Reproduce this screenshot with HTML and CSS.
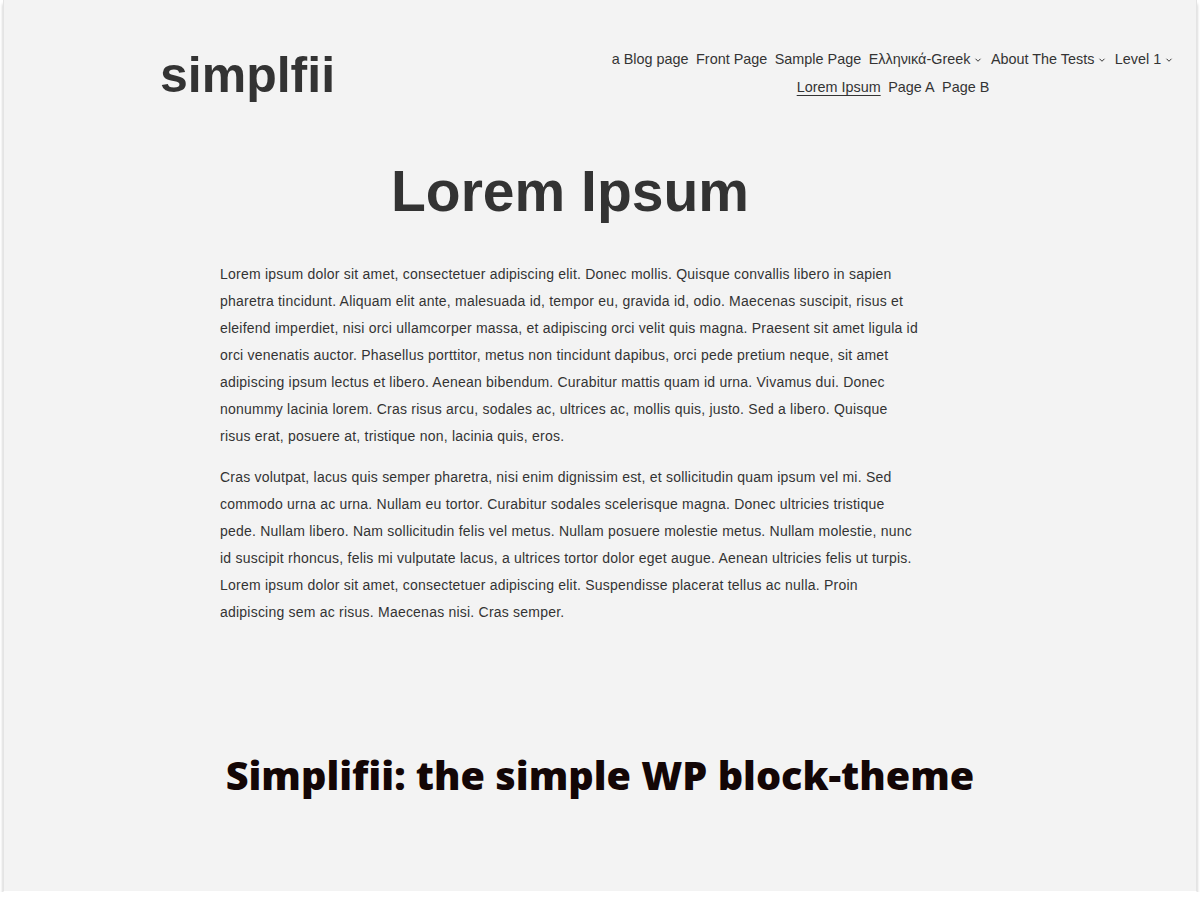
FILE: index.html
```html
<!DOCTYPE html>
<html lang="en">
<head>
<meta charset="utf-8">
<title>simplfii</title>
<link rel="stylesheet" href="styles.css">
</head>
<body>
<div class="frame">
  <header class="site-header">
    <div class="logo">simplfii</div>
    <nav class="nav">
      <a class="nav-item" href="#">a Blog page</a>
      <a class="nav-item" href="#">Front Page</a>
      <a class="nav-item" href="#">Sample Page</a>
      <a class="nav-item" href="#">Ελληνικά-Greek<svg class="chev" viewBox="0 0 12 12"><path d="M3 4.5 6 7.5 9 4.5" fill="none" stroke="currentColor" stroke-width="1.2"/></svg></a>
      <a class="nav-item" href="#">About The Tests<svg class="chev" viewBox="0 0 12 12"><path d="M3 4.5 6 7.5 9 4.5" fill="none" stroke="currentColor" stroke-width="1.2"/></svg></a>
      <a class="nav-item" href="#">Level 1<svg class="chev" viewBox="0 0 12 12"><path d="M3 4.5 6 7.5 9 4.5" fill="none" stroke="currentColor" stroke-width="1.2"/></svg></a>
      <a class="nav-item current" href="#">Lorem Ipsum</a>
      <a class="nav-item" href="#">Page A</a>
      <a class="nav-item" href="#">Page B</a>
    </nav>
  </header>
  <main class="content">
    <h1 class="title">Lorem Ipsum</h1>
    <p class="para">Lorem ipsum dolor sit amet, consectetuer adipiscing elit. Donec mollis. Quisque convallis libero in sapien pharetra tincidunt. Aliquam elit ante, malesuada id, tempor eu, gravida id, odio. Maecenas suscipit, risus et eleifend imperdiet, nisi orci ullamcorper massa, et adipiscing orci velit quis magna. Praesent sit amet ligula id orci venenatis auctor. Phasellus porttitor, metus non tincidunt dapibus, orci pede pretium neque, sit amet adipiscing ipsum lectus et libero. Aenean bibendum. Curabitur mattis quam id urna. Vivamus dui. Donec nonummy lacinia lorem. Cras risus arcu, sodales ac, ultrices ac, mollis quis, justo. Sed a libero. Quisque risus erat, posuere at, tristique non, lacinia quis, eros.</p>
    <p class="para">Cras volutpat, lacus quis semper pharetra, nisi enim dignissim est, et sollicitudin quam ipsum vel mi. Sed commodo urna ac urna. Nullam eu tortor. Curabitur sodales scelerisque magna. Donec ultricies tristique pede. Nullam libero. Nam sollicitudin felis vel metus. Nullam posuere molestie metus. Nullam molestie, nunc id suscipit rhoncus, felis mi vulputate lacus, a ultrices tortor dolor eget augue. Aenean ultricies felis ut turpis. Lorem ipsum dolor sit amet, consectetuer adipiscing elit. Suspendisse placerat tellus ac nulla. Proin adipiscing sem ac risus. Maecenas nisi. Cras semper.</p>
  </main>
  <footer class="tagline">Simplifii: the simple WP block-theme</footer>
</div>
</body>
</html>
```

FILE: styles.css
```css
html, body {
  margin: 0;
  padding: 0;
  background: #ffffff;
}

.frame {
  box-sizing: border-box;
  margin: 0 3px;
  height: 892px;
  background: #f3f3f3;
  border-left: 1px solid #e4e4e4;
  border-right: 1px solid #e4e4e4;
  border-bottom: 1px solid #ffffff;
  box-shadow: 0 4px 3px rgba(0, 0, 0, 0.25);
  overflow: hidden;
  font-family: "Liberation Sans", Arial, sans-serif;
  color: #333333;
}

.site-header {
  display: flex;
  justify-content: space-between;
  align-items: flex-start;
  padding: 45px 13px 0 156px;
}

.logo {
  margin-top: 5px;
  font-size: 50px;
  line-height: 1;
  font-weight: 700;
  color: #333333;
}

.nav {
  width: 580px;
  display: flex;
  flex-wrap: wrap;
  justify-content: center;
  column-gap: 7.5px;
  font-size: 14.4px;
  line-height: 28px;
}

.nav-item {
  display: inline-flex;
  align-items: center;
  color: #333333;
  text-decoration: none;
}

.nav-item.current {
  text-decoration: underline;
  text-decoration-thickness: 1px;
  text-underline-offset: 3px;
}

.chev {
  width: 10px;
  height: 10px;
  margin-left: 3px;
  margin-top: 2px;
}

.content {
  width: 700px;
  margin: 0 0 0 216px;
}

.title {
  margin: 56px 0 36px;
  text-align: center;
  font-size: 57px;
  line-height: 1.2;
  font-weight: 700;
  color: #333333;
}

.para {
  margin: 0 0 14px;
  font-size: 14px;
  line-height: 27px;
  color: #333333;
  letter-spacing: 0.22px;
}

.tagline {
  margin-top: 126px;
  text-align: center;
  font-family: "Open Sans", sans-serif;
  font-weight: 800;
  font-size: 39.6px;
  line-height: 1.2;
  color: #130606;
}
```
